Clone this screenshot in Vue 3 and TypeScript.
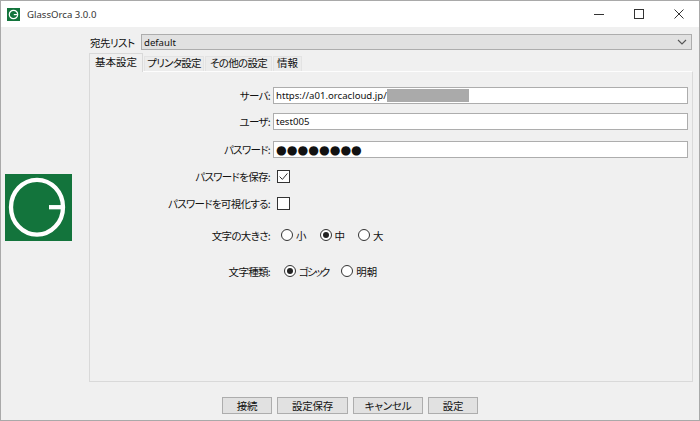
<script setup lang="ts">
const tabs = [
  { t: '基本設定', w: 54, tight: false },
  { t: 'プリンタ設定', w: 60, tight: true },
  { t: 'その他の設定', w: 67, tight: true },
  { t: '情報', w: 29, tight: false },
]
const sizes = [{ t: '小', on: false }, { t: '中', on: true }, { t: '大', on: false }]
const kinds = [{ t: 'ゴシック', on: true, tight: true }, { t: '明朝', on: false, tight: false }]
const buttons = [{ t: '接続', w: 50 }, { t: '設定保存', w: 71 }, { t: 'キャンセル', w: 70 }, { t: '設定', w: 50 }]
const dots = '●●●●●●●●'
</script>

<template>
  <div class="window">
    <header class="titlebar">
      <svg class="appicon" width="13" height="13" viewBox="0 0 13 13">
        <rect width="13" height="13" fill="#13743c" />
        <circle cx="6.5" cy="6.5" r="4.2" fill="none" stroke="#fff" stroke-width="1.2" />
        <path d="M6.8 6.6H10.6" stroke="#fff" stroke-width="1.2" />
      </svg>
      <span class="title">GlassOrca 3.0.0</span>
      <div class="controls">
        <svg width="10" height="10" viewBox="0 0 10 10"><path d="M0 5.5H10" stroke="#333" stroke-width="1" /></svg>
        <svg width="10" height="10" viewBox="0 0 10 10"><rect x=".5" y=".5" width="9" height="9" fill="none" stroke="#333" /></svg>
        <svg width="10" height="10" viewBox="0 0 10 10"><path d="M.5.5l9 9M9.5.5l-9 9" stroke="#333" stroke-width="1" /></svg>
      </div>
    </header>

    <div class="body">
      <aside class="side">
        <svg class="logo" width="67" height="67" viewBox="0 0 67 67">
          <rect width="67" height="67" fill="#13743c" />
          <ellipse cx="32" cy="33.2" rx="26" ry="27.4" fill="none" stroke="#fff" stroke-width="4.3" />
          <path d="M44 33.2H58" stroke="#fff" stroke-width="4.3" />
        </svg>
      </aside>

      <main class="main">
        <div class="dest">
          <span class="dest-label">宛先リスト</span>
          <div class="combo">
            <span>default</span>
            <svg width="10" height="6" viewBox="0 0 10 6"><path d="M1 1l4 4 4-4" fill="none" stroke="#555" stroke-width="1.1" /></svg>
          </div>
        </div>

        <nav class="tabs">
          <div
            v-for="(t, i) in tabs"
            :key="t.t"
            class="tab"
            :class="{ active: i === 0, tight: t.tight }"
            :style="{ width: t.w + 'px' }"
          >{{ t.t }}</div>
        </nav>

        <section class="panel">
          <div class="fields">
            <label class="lab">サーバ:</label>
            <div class="input">
              <span>https://a01.orcacloud.jp/</span><span class="redact"></span>
            </div>
            <label class="lab">ユーザ:</label>
            <div class="input"><span>test005</span></div>
            <label class="lab lab-third">パスワード:</label>
            <div class="input input-third"><span class="dots">{{ dots }}</span></div>
          </div>

          <div class="row check-first">
            <span class="lab">パスワードを保存:</span>
            <span class="check">
              <svg width="13" height="13" viewBox="0 0 13 13">
                <rect x=".5" y=".5" width="12" height="12" fill="#fff" stroke="#333" />
                <path d="M2.6 6.6l2.8 2.8 5-6" fill="none" stroke="#333" stroke-width="1" />
              </svg>
            </span>
          </div>
          <div class="row check-second">
            <span class="lab">パスワードを可視化する:</span>
            <span class="check">
              <svg width="13" height="13" viewBox="0 0 13 13">
                <rect x=".5" y=".5" width="12" height="12" fill="#fff" stroke="#333" />
              </svg>
            </span>
          </div>

          <div class="row size-row">
            <span class="lab">文字の大きさ:</span>
            <div class="radios">
              <span v-for="s in sizes" :key="s.t" class="radio">
                <span class="dot" :class="{ on: s.on }"></span>{{ s.t }}
              </span>
            </div>
          </div>
          <div class="row kind-row">
            <span class="lab">文字種類:</span>
            <div class="radios kinds">
              <span v-for="s in kinds" :key="s.t" class="radio">
                <span class="dot" :class="{ on: s.on }"></span><span :class="{ squeeze: s.tight }">{{ s.t }}</span>
              </span>
            </div>
          </div>
        </section>

        <footer class="footer">
          <button v-for="b in buttons" :key="b.t" class="btn" :style="{ width: b.w + 'px' }">{{ b.t }}</button>
        </footer>
      </main>
    </div>
  </div>
</template>

<style>
html, body { margin: 0; padding: 0; }
</style>

<style scoped>
.window {
  width: 700px;
  height: 421px;
  box-sizing: border-box;
  border: 1px solid #a9a9a9;
  background: #f0f0f0;
  display: flex;
  flex-direction: column;
  font-family: "Noto Sans CJK JP", "Noto Sans", sans-serif;
  font-size: 10.5px;
  font-feature-settings: "palt";
  color: #111;
  overflow: hidden;
}
.titlebar {
  height: 26px;
  flex: none;
  background: #fff;
  display: flex;
  align-items: center;
  padding-left: 6px;
}
.appicon { flex: none; }
.title {
  margin-left: 7px;
  font-family: "Noto Sans", sans-serif;
  font-size: 9.6px;
  color: #333;
}
.controls {
  margin-left: auto;
  display: flex;
  gap: 30px;
  padding-right: 15px;
}
.body { flex: 1; display: flex; min-height: 0; }
.side {
  width: 88px;
  flex: none;
  padding-top: 147px;
  padding-left: 4px;
  box-sizing: border-box;
}
.logo { display: block; }
.main { flex: 1; display: flex; flex-direction: column; padding-top: 7px; }
.dest { display: flex; align-items: center; height: 16px; margin-right: 7px; }
.dest-label { width: 52px; flex: none; padding-left: 1px; box-sizing: border-box; letter-spacing: -0.5px; }
.combo {
  flex: 1;
  height: 16px;
  box-sizing: border-box;
  border: 1px solid #adadad;
  background: #e1e1e1;
  display: flex;
  align-items: center;
  justify-content: space-between;
  padding: 0 4px 0 2px;
  font-family: "Noto Sans", sans-serif;
  font-size: 9.6px;
}
.tabs { display: flex; margin-top: 3px; height: 18px; align-items: flex-end; }
.tab {
  height: 15px;
  line-height: 12px;
  box-sizing: border-box;
  border: 1px solid #e3e3e3;
  border-bottom: none;
  background: #ececec;
  white-space: nowrap;
  margin-right: 1px;
  text-align: center;
}
.tab.tight { letter-spacing: -0.7px; }
.tab.active {
  height: 19px;
  line-height: 15px;
  background: #f0f0f0;
  border-color: #d9d9d9;
  position: relative;
  z-index: 1;
  margin-bottom: -1px;
}
.panel {
  height: 311px;
  margin-right: 6px;
  box-sizing: border-box;
  border: 1px solid #d9d9d9;
  border-top-color: #fdfdfd;
  background: #f0f0f0;
  padding-top: 15px;
}
.fields {
  display: grid;
  grid-template-columns: 180px 415px;
  column-gap: 3px;
  row-gap: 9px;
  align-items: center;
}
.lab-third, .input-third { margin-top: 2px; }
.lab { text-align: right; white-space: nowrap; letter-spacing: -0.7px; }
.input {
  height: 17px;
  box-sizing: border-box;
  border: 1px solid #adadad;
  background: #fff;
  display: flex;
  align-items: center;
  padding-left: 2px;
  font-size: 9.6px;
  font-family: "Noto Sans", sans-serif;
}
.redact { width: 82px; height: 13px; background: #aaa; }
.dots { font-size: 12.3px; letter-spacing: 0; color: #111; font-family: "DejaVu Sans", sans-serif; }
.row { display: flex; align-items: center; height: 16px; }
.row .lab { width: 180px; flex: none; }
.check { display: flex; margin-left: 7px; }
.check-first { margin-top: 10px; }
.check-second { margin-top: 11px; }
.size-row { margin-top: 16px; }
.kind-row { margin-top: 20px; }
.radios { display: flex; gap: 13px; margin-left: 11px; }
.kinds { margin-left: 14px; gap: 13px; }
.radio { display: inline-flex; align-items: center; gap: 3px; white-space: nowrap; }
.squeeze { letter-spacing: -2px; }
.dot {
  width: 12px;
  height: 12px;
  box-sizing: border-box;
  border: 1px solid #333;
  border-radius: 50%;
  background: #fff;
  display: inline-flex;
  align-items: center;
  justify-content: center;
}
.dot.on::after {
  content: "";
  width: 6px;
  height: 6px;
  border-radius: 50%;
  background: #222;
}
.footer {
  display: flex;
  justify-content: flex-start;
  gap: 5px;
  padding-left: 133px;
  margin-top: 15px;
}
.btn {
  height: 17px;
  padding: 0;
  box-sizing: border-box;
  border: 1px solid #adadad;
  background: #e1e1e1;
  font: inherit;
  font-feature-settings: inherit;
  color: #111;
  line-height: 13px;
  letter-spacing: -0.2px;
}
</style>
